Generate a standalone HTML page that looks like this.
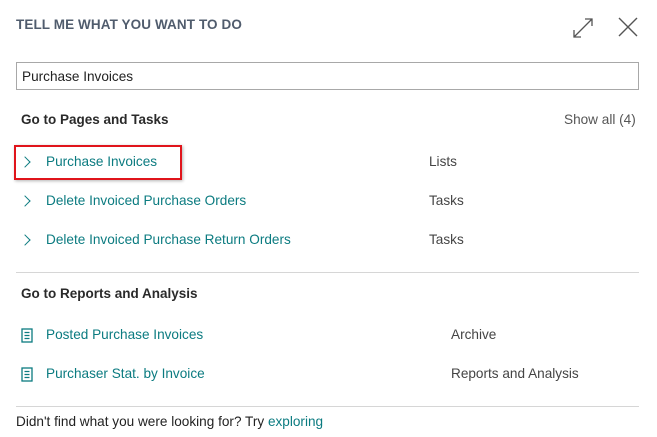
<!DOCTYPE html>
<html><head><style>
body{margin:0;width:657px;height:437px;background:#fff;font-family:"Liberation Sans",sans-serif;position:relative;overflow:hidden;color:#212121}
.a{position:absolute;white-space:nowrap;line-height:16px}
.t{color:#0b7b80;font-size:13.6px}
.g{color:#444;font-size:13.6px}
.h{font-weight:bold;font-size:13.5px;color:#2a2a2a}
.ch{position:absolute;width:7px;height:7px;border-top:1.3px solid #0b7b80;border-right:1.3px solid #0b7b80;transform:rotate(45deg)}
.ln{position:absolute;left:16px;width:623px;height:1px;background:#d6d6d6}
</style></head><body>
<div class="a" style="left:16px;top:17px;font-size:13.5px;font-weight:bold;color:#505c6d;letter-spacing:0.1px">TELL ME WHAT YOU WANT TO DO</div>
<svg style="position:absolute;left:571px;top:16px" width="24" height="24" viewBox="0 0 24 24" fill="none" stroke="#555" stroke-width="1.3"><path d="M3 21L21 3M14 3h7v7M3 14v7h7"/></svg>
<svg style="position:absolute;left:618px;top:17px" width="20" height="20" viewBox="0 0 20 20" stroke="#555" stroke-width="1.4"><path d="M1 1L19 19M19 1L1 19"/></svg>
<div style="position:absolute;left:16px;top:62px;width:621px;height:26px;border:1px solid #a8a8a8"></div>
<div class="a" style="left:22px;top:69px;font-size:13.6px;color:#222">Purchase Invoices</div>
<div class="a h" style="left:21px;top:112px">Go to Pages and Tasks</div>
<div class="a g" style="left:564px;top:112px;color:#555">Show all (4)</div>
<div style="position:absolute;left:14px;top:145px;width:164px;height:31px;border:2px solid #e0141b;box-shadow:1px 1px 3px rgba(0,0,0,.3)"></div>
<div class="ch" style="left:21px;top:158px"></div>
<div class="a t" style="left:46px;top:154px">Purchase Invoices</div>
<div class="a g" style="left:429px;top:154px">Lists</div>
<div class="ch" style="left:21px;top:197px"></div>
<div class="a t" style="left:46px;top:193px">Delete Invoiced Purchase Orders</div>
<div class="a g" style="left:429px;top:193px">Tasks</div>
<div class="ch" style="left:21px;top:236px"></div>
<div class="a t" style="left:46px;top:232px">Delete Invoiced Purchase Return Orders</div>
<div class="a g" style="left:429px;top:232px">Tasks</div>
<div class="ln" style="top:272px"></div>
<div class="a h" style="left:21px;top:286px">Go to Reports and Analysis</div>
<svg style="position:absolute;left:21px;top:328px" width="12" height="15" viewBox="0 0 12 15" fill="none" stroke="#0b7b80" stroke-width="1.3"><rect x="1" y="1" width="10" height="13"/><path d="M3.5 4.5h5M3.5 7.5h5M3.5 10.5h5"/></svg>
<div class="a t" style="left:46px;top:327px">Posted Purchase Invoices</div>
<div class="a g" style="left:451px;top:327px">Archive</div>
<svg style="position:absolute;left:21px;top:367px" width="12" height="15" viewBox="0 0 12 15" fill="none" stroke="#0b7b80" stroke-width="1.3"><rect x="1" y="1" width="10" height="13"/><path d="M3.5 4.5h5M3.5 7.5h5M3.5 10.5h5"/></svg>
<div class="a t" style="left:46px;top:366px">Purchaser Stat. by Invoice</div>
<div class="a g" style="left:451px;top:366px">Reports and Analysis</div>
<div class="ln" style="top:406px"></div>
<div class="a" style="left:16px;top:414px;font-size:13.6px;color:#222">Didn't find what you were looking for? Try <span style="color:#0b7b80">exploring</span></div>
</body></html>
